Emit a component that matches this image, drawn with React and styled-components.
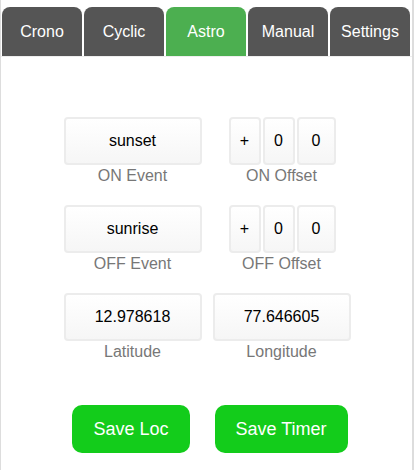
import React from 'react'
import styled, { createGlobalStyle } from 'styled-components'

const GlobalStyle = createGlobalStyle`
    html, body {
        margin: 0;
        padding: 0;
        background: #fff;
        font-family: "Liberation Sans", Arial, sans-serif;
    }
`

const tabs = ['Crono', 'Cyclic', 'Astro', 'Manual', 'Settings']

const App = () => {
    return (
        <>
            <GlobalStyle />
            <Page>
                <TabBar>
                    {tabs.map(t => (
                        <Tab key={t} $active={t === 'Astro'}>{t}</Tab>
                    ))}
                </TabBar>
                <Panel>
                    <FieldGrid>
                        <Field>
                            <Box>sunset</Box>
                            <Label>ON Event</Label>
                        </Field>
                        <Field>
                            <OffsetGroup>
                                <SmallBox>+</SmallBox>
                                <SmallBox>0</SmallBox>
                                <SmallBox $wide>0</SmallBox>
                            </OffsetGroup>
                            <Label>ON Offset</Label>
                        </Field>
                        <Field>
                            <Box>sunrise</Box>
                            <Label>OFF Event</Label>
                        </Field>
                        <Field>
                            <OffsetGroup>
                                <SmallBox>+</SmallBox>
                                <SmallBox>0</SmallBox>
                                <SmallBox $wide>0</SmallBox>
                            </OffsetGroup>
                            <Label>OFF Offset</Label>
                        </Field>
                        <Field>
                            <Box>12.978618</Box>
                            <Label>Latitude</Label>
                        </Field>
                        <Field>
                            <Box>77.646605</Box>
                            <Label>Longitude</Label>
                        </Field>
                    </FieldGrid>
                    <ButtonRow>
                        <SaveButton>Save Loc</SaveButton>
                        <SaveButton>Save Timer</SaveButton>
                    </ButtonRow>
                </Panel>
            </Page>
        </>
    )
}

export default App

const Page = styled.div`
    box-sizing: border-box;
    width: 414px;
    height: 470px;
    border-left: 1px solid #ddd;
    border-right: 2px solid #ddd;
`

const TabBar = styled.div`
    display: flex;
    gap: 2px;
    padding: 7px 0 0 1px;
    border-bottom: 1px solid #eee;
`

const Tab = styled.div`
    width: 80px;
    height: 49px;
    display: flex;
    align-items: center;
    justify-content: center;
    border-radius: 8px 8px 0 0;
    background: ${p => (p.$active ? '#4caf50' : '#555')};
    color: #fff;
    font-size: 16px;
`

const Panel = styled.div`
    padding-top: 60px;
`

const FieldGrid = styled.div`
    display: grid;
    grid-template-columns: 138px 138px;
    column-gap: 11px;
    row-gap: 20px;
    justify-content: center;
    margin-left: 1px;
`

const Field = styled.div`
    display: flex;
    flex-direction: column;
    align-items: center;
`

const boxLook = `
    box-sizing: border-box;
    height: 48px;
    display: flex;
    align-items: center;
    justify-content: center;
    background: linear-gradient(#fff, #f6f6f6);
    border: 2px solid #ececec;
    border-radius: 4px;
    color: #000;
    font-size: 16px;
`

const Box = styled.div`
    ${boxLook}
    width: 138px;
`

const OffsetGroup = styled.div`
    display: flex;
    gap: 2px;
    margin-left: 1px;
`

const SmallBox = styled.div`
    ${boxLook}
    width: ${p => (p.$wide ? '39px' : '32px')};
`

const Label = styled.div`
    margin-top: 2px;
    color: #777;
    font-size: 16px;
    line-height: 18px;
`

const ButtonRow = styled.div`
    display: flex;
    justify-content: center;
    gap: 25px;
    margin-top: 44px;
    padding-left: 7px;
`

const SaveButton = styled.button`
    height: 48px;
    padding: 0 21px;
    border: none;
    border-radius: 10px;
    background: #13cc1b;
    color: #fff;
    font-family: "Liberation Sans", Arial, sans-serif;
    font-size: 18px;
`
